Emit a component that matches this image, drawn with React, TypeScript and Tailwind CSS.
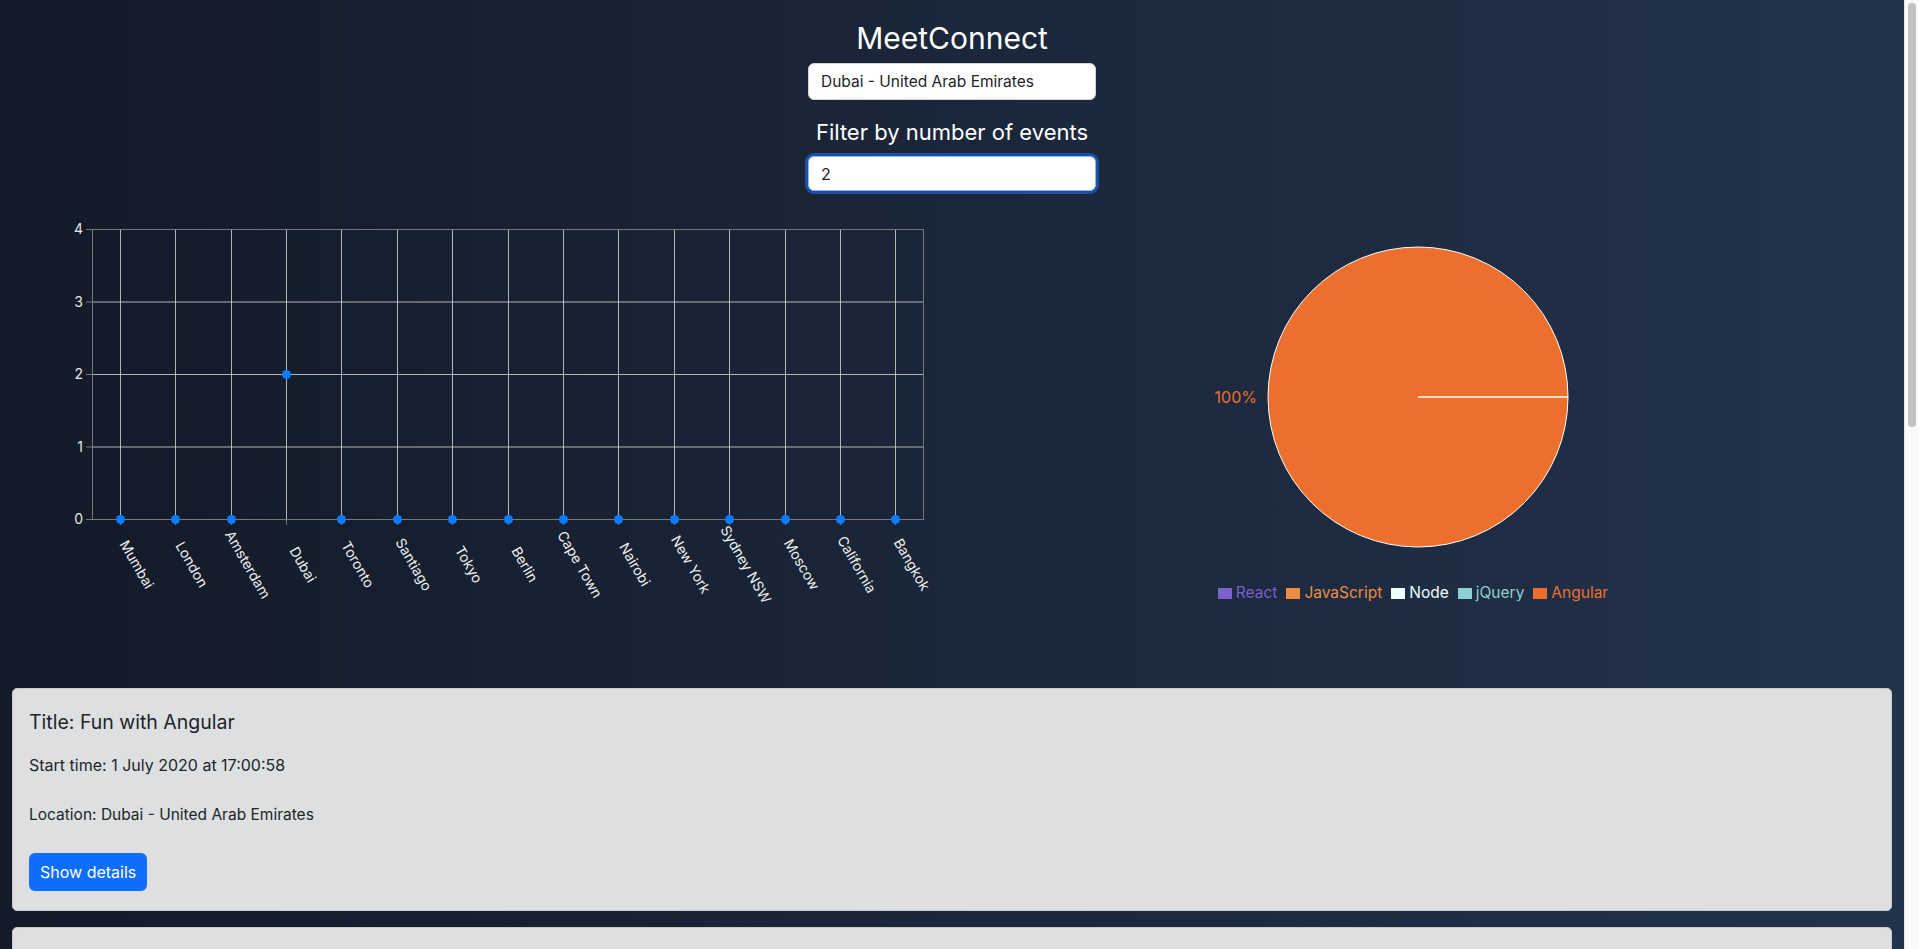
import React from "react";

const CITIES = [
  "Mumbai",
  "London",
  "Amsterdam",
  "Dubai",
  "Toronto",
  "Santiago",
  "Tokyo",
  "Berlin",
  "Cape Town",
  "Nairobi",
  "New York",
  "Sydney NSW",
  "Moscow",
  "California",
  "Bangkok",
];

const COUNTS: Record<string, number> = { Dubai: 2 };

const LEGEND = [
  { name: "React", color: "#7b61c9" },
  { name: "JavaScript", color: "#ee8c43" },
  { name: "Node", color: "#f0ffff" },
  { name: "jQuery", color: "#8ecfd1" },
  { name: "Angular", color: "#ec6f2e" },
];

const EVENTS = [
  {
    title: "Fun with Angular",
    start: "1 July 2020 at 17:00:58",
    location: "Dubai - United Arab Emirates",
  },
  {
    title: "Angular Meetup",
    start: "2 July 2020 at 17:00:58",
    location: "Dubai - United Arab Emirates",
  },
];

/* plot box inside the svg */
const X0 = 92;
const X1 = 923;
const Y0 = 28;
const Y1 = 318;

function ScatterChart() {
  const band = (X1 - X0) / CITIES.length;
  const yFor = (v: number) => Y1 - ((Y1 - Y0) * v) / 4;

  return (
    <svg width={952} height={420} className="block" style={{ fontFamily: "Inter, sans-serif" }}>
      {/* grid */}
      {[1, 2, 3].map((v) => (
        <line key={v} x1={X0} x2={X1} y1={yFor(v) + 0.5} y2={yFor(v) + 0.5} stroke="#cfcfcf" strokeOpacity={0.85} />
      ))}
      {CITIES.map((c, i) => {
        const x = Math.round(X0 + band * (i + 0.5)) + 0.5;
        return <line key={c} x1={x} x2={x} y1={Y0} y2={Y1} stroke="#cfcfcf" strokeOpacity={0.85} />;
      })}
      <line x1={X0} x2={X1} y1={Y0 + 0.5} y2={Y0 + 0.5} stroke="#777" />
      <line x1={X1 + 0.5} x2={X1 + 0.5} y1={Y0} y2={Y1} stroke="#777" />

      {/* axes */}
      <line x1={X0 + 0.5} x2={X0 + 0.5} y1={Y0} y2={Y1 + 1} stroke="#777" />
      <line x1={X0} x2={X1 + 1} y1={Y1 + 0.5} y2={Y1 + 0.5} stroke="#777" />
      {[0, 1, 2, 3, 4].map((v) => (
        <g key={v}>
          <line x1={X0 - 6} x2={X0} y1={yFor(v) + 0.5} y2={yFor(v) + 0.5} stroke="#777" />
          <text x={X0 - 9} y={yFor(v) + 5} textAnchor="end" fontSize={14} fill="#e8e8e8">
            {v}
          </text>
        </g>
      ))}
      {CITIES.map((c, i) => {
        const x = Math.round(X0 + band * (i + 0.5)) + 0.5;
        return (
          <g key={c}>
            <line x1={x} x2={x} y1={Y1} y2={Y1 + 6} stroke="#777" />
            <text
              x={x + 12}
              y={366}
              textAnchor="middle"
              fontSize={14}
              fill="#f0f0f0"
              transform={`rotate(60 ${x + 12} 366)`}
            >
              {c}
            </text>
          </g>
        );
      })}

      {/* points */}
      {CITIES.map((c, i) => {
        const x = Math.round(X0 + band * (i + 0.5)) + 0.5;
        return <circle key={c} cx={x} cy={yFor(COUNTS[c] ?? 0) + 0.5} r={4.5} fill="#0b7bff" />;
      })}
    </svg>
  );
}

function GenrePie() {
  const cx = 466;
  const cy = 196;
  const r = 150;
  return (
    <svg width={952} height={372} className="block" style={{ fontFamily: "Inter, sans-serif" }}>
      <circle cx={cx} cy={cy} r={r} fill="#ec6f2e" stroke="#fff" strokeWidth={1} />
      <line x1={cx} x2={cx + r} y1={cy} y2={cy} stroke="#fff" strokeWidth={1.5} />
      <text x={305} y={cy + 6} textAnchor="end" fontSize={16} fill="#ec6f2e">
        100%
      </text>
    </svg>
  );
}

function EventCard({ title, start, location }: { title: string; start: string; location: string }) {
  return (
    <div className="rounded-[5px] border border-[#c9cacc] bg-[#dedfe1] px-4 pt-[21px] pb-[19px] text-[#212529]">
      <h2 className="text-[19.5px] leading-[24px]">Title: {title}</h2>
      <p className="mt-[19px] text-base leading-6">Start time: {start}</p>
      <p className="mt-[26px] text-[15.5px] leading-6">Location: {location}</p>
      <button className="mt-[26px] h-[38px] rounded-md bg-[#0d6efd] px-[11px] text-base text-white">
        Show details
      </button>
    </div>
  );
}

export default function App() {
  return (
    <div
      className="flex h-screen overflow-hidden text-white"
      style={{ fontFamily: "Inter, 'Liberation Sans', sans-serif" }}
    >
      <div className="min-w-0 flex-1 overflow-hidden bg-linear-to-r from-[#131a28] to-[#22334c]">
        <header className="flex flex-col items-center pt-5">
          <h1 className="text-[30px] leading-9">MeetConnect</h1>
          <input
            readOnly
            value="Dubai - United Arab Emirates"
            className="mt-[7px] h-[37px] w-[288px] rounded-md border border-[#ced4da] bg-white px-3 text-[15.5px] text-[#212529] outline-none"
          />
          <h3 className="mt-5 text-[22px] leading-6">Filter by number of events</h3>
          <input
            readOnly
            value="2"
            className="mt-3 h-[35px] w-[288px] rounded-md border border-[#86b7fe] bg-white px-3 text-base text-[#212529] shadow-[0_0_0_3px_#1f4f9e] outline-none"
          />
        </header>

        <section className="mt-[10px] flex">
          <div className="w-1/2">
            <ScatterChart />
          </div>
          <div className="flex w-1/2 flex-col">
            <GenrePie />
            <ul className="mt-[10px] flex justify-center gap-[9px] pr-[30px] text-[15.5px] leading-5">
              {LEGEND.map((item) => (
                <li key={item.name} className="flex items-center gap-1" style={{ color: item.color }}>
                  <span className="h-[11px] w-[14px]" style={{ backgroundColor: item.color }} />
                  {item.name}
                </li>
              ))}
            </ul>
          </div>
        </section>

        <main className="mt-[67px] flex flex-col gap-4 px-3">
          {EVENTS.map((e) => (
            <EventCard key={e.title} {...e} />
          ))}
        </main>
      </div>

      {/* page scrollbar */}
      <div className="w-[15px] shrink-0 border-l border-[#e6e6e6] bg-[#fafafa] pt-[3px]">
        <div className="mx-auto h-[424px] w-[8px] rounded-full bg-[#c1c1c1]" />
      </div>
    </div>
  );
}
